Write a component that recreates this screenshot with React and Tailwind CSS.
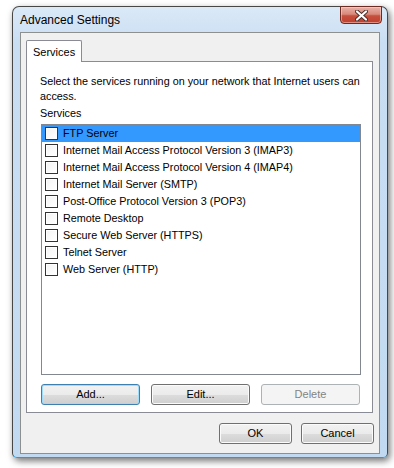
const SERVICES = [
  "FTP Server",
  "Internet Mail Access Protocol Version 3 (IMAP3)",
  "Internet Mail Access Protocol Version 4 (IMAP4)",
  "Internet Mail Server (SMTP)",
  "Post-Office Protocol Version 3 (POP3)",
  "Remote Desktop",
  "Secure Web Server (HTTPS)",
  "Telnet Server",
  "Web Server (HTTP)",
];

const font = { fontFamily: '"Liberation Sans", Arial, sans-serif' };

function Button({ children, variant = "normal", className = "" }) {
  const styles = {
    normal:
      "border-[#707070] text-black bg-[linear-gradient(180deg,#f2f2f2_0%,#ebebeb_50%,#dddddd_50%,#cfcfcf_100%)] shadow-[inset_0_0_0_1px_#fbfbfb]",
    focus:
      "border-[#3c7fb1] text-black bg-[linear-gradient(180deg,#f2f2f2_0%,#ebebeb_50%,#dddddd_50%,#cfcfcf_100%)] shadow-[inset_0_0_0_1px_#9fdcfa]",
    disabled: "border-[#adb2b5] text-[#838383] bg-[#f4f4f4]",
  };
  return (
    <div
      className={`h-[21px] flex items-center justify-center rounded-[3px] border text-[11px] ${styles[variant]} ${className}`}
    >
      {children}
    </div>
  );
}

function Checkbox() {
  return (
    <div className="w-[13px] h-[13px] border border-[#333] bg-white flex items-center justify-center shrink-0">
      <div className="w-[9px] h-[9px] bg-[linear-gradient(135deg,#f4f4f4,#ffffff)]" />
    </div>
  );
}

export default function App() {
  return (
    <div className="w-[394px] h-[468px] bg-white pt-[6px] pl-[12px] overflow-hidden" style={font}>
      <div className="w-[376px] h-[452px] flex flex-col rounded-t-[7px] rounded-b-[5px] border border-[#474747] border-b-[#2a9ad6] bg-[linear-gradient(180deg,#dbe9f7_0%,#c9def3_8%,#c2daf1_100%)] shadow-[2px_3px_7px_rgba(0,0,0,0.55)]">
        <div className="h-[25px] flex justify-between pl-[7px] pr-[5px]">
          <div className="pt-[6px] leading-[14px] text-[12px] text-black">Advanced Settings</div>
          <div className="mt-[-1px] w-[42px] h-[18px] rounded-b-[4px] border border-[#6e2a20] bg-[linear-gradient(180deg,#e8b3a8_0%,#d98a7c_45%,#c6503f_55%,#c0402f_100%)] shadow-[inset_0_0_0_1px_rgba(255,220,210,0.5)] flex items-center justify-center">
            <svg width="13" height="11" viewBox="0 0 13 11">
              <path
                d="M2 1.5 L11 9.5 M11 1.5 L2 9.5"
                stroke="#4a2a28"
                strokeWidth="4"
                strokeLinecap="round"
              />
              <path
                d="M2 1.5 L11 9.5 M11 1.5 L2 9.5"
                stroke="#ffffff"
                strokeWidth="2.2"
                strokeLinecap="round"
              />
            </svg>
          </div>
        </div>

        <div className="mx-[7px] mb-[3px] flex-1 border border-[#8e8f8f] bg-[#f0f0f0] flex flex-col">
          <div className="pl-[5px] pt-[7px] flex">
            <div className="relative z-10 h-[22px] w-[56px] mb-[-1px] border border-b-0 border-[#898c95] rounded-t-[2px] bg-white pl-[6px] pt-[4px] text-[11px] leading-[14px]">
              Services
            </div>
          </div>
          <div className="ml-[5px] mr-[6px] h-[352px] border border-[#898c95] bg-white flex flex-col pl-[13px] pt-[12px] text-[10.8px] text-black">
            <div className="leading-[15px]">
              Select the services running on your network that Internet users can
              <br />
              access.
            </div>
            <div className="mt-[2px] leading-[15px]">Services</div>
            <div className="mt-[3px] ml-[1px] w-[320px] h-[251px] border border-[#828790] bg-white flex flex-col">
              {SERVICES.map((s, i) => (
                <div
                  key={s}
                  className={`h-[17px] flex items-center pl-[3px] gap-[5px] ${i === 0 ? "bg-[#3399ff]" : ""}`}
                >
                  <Checkbox />
                  <span className="leading-[15px] whitespace-nowrap">{s}</span>
                </div>
              ))}
            </div>
            <div className="mt-[9px] ml-[1px] flex gap-[11px]">
              <Button variant="focus" className="w-[99px]">Add...</Button>
              <Button className="w-[99px]">Edit...</Button>
              <Button variant="disabled" className="w-[99px]">Delete</Button>
            </div>
          </div>
          <div className="mt-[10px] pr-[5px] flex justify-end gap-[9px]">
            <Button className="w-[73px]">OK</Button>
            <Button className="w-[73px]">Cancel</Button>
          </div>
        </div>
      </div>
    </div>
  );
}
